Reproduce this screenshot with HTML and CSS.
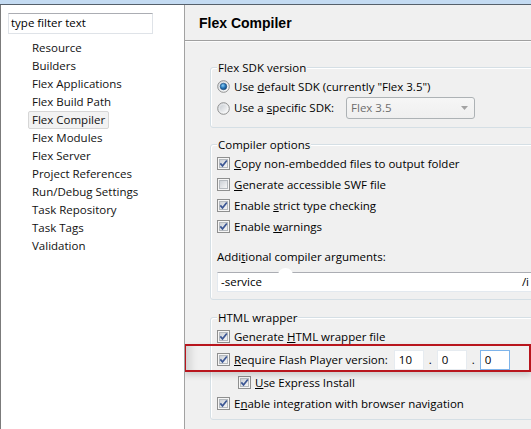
FILE: index.html
```html
<!DOCTYPE html>
<html>
<head>
<meta charset="utf-8">
<link rel="stylesheet" href="styles.css">
</head>
<body>
<svg class="defs" width="0" height="0" aria-hidden="true">
  <defs>
    <linearGradient id="cbg" x1="0" y1="0" x2="1" y2="1">
      <stop offset="0" stop-color="#c9ced4"/>
      <stop offset="1" stop-color="#f8f8f8"/>
    </linearGradient>
    <linearGradient id="rg" x1="0" y1="0" x2="1" y2="1">
      <stop offset="0" stop-color="#d6d9dd"/>
      <stop offset="1" stop-color="#ffffff"/>
    </linearGradient>
    <radialGradient id="rdot" cx="0.4" cy="0.35" r="0.7">
      <stop offset="0" stop-color="#8fd0f5"/>
      <stop offset="0.5" stop-color="#2a7cc0"/>
      <stop offset="1" stop-color="#12406e"/>
    </radialGradient>
    <symbol id="cb-on" viewBox="0 0 13 13">
      <rect x=".5" y=".5" width="12" height="12" fill="#f6f6f6" stroke="#8e8f8f"/>
      <rect x="2.5" y="2.5" width="8" height="8" fill="url(#cbg)" stroke="#b4b9be"/>
      <path d="M3.3 6.4 5.5 8.9 9.8 3.4" fill="none" stroke="#3b5694" stroke-width="1.7"/>
    </symbol>
    <symbol id="cb-off" viewBox="0 0 13 13">
      <rect x=".5" y=".5" width="12" height="12" fill="#f6f6f6" stroke="#8e8f8f"/>
      <rect x="2.5" y="2.5" width="8" height="8" fill="url(#cbg)" stroke="#b4b9be"/>
    </symbol>
    <symbol id="rb-on" viewBox="0 0 13 13">
      <circle cx="6.5" cy="6.5" r="5.8" fill="url(#rg)" stroke="#8e8f8f"/>
      <circle cx="6.5" cy="6.5" r="3.3" fill="url(#rdot)" stroke="#1b4d80" stroke-width=".6"/>
    </symbol>
    <symbol id="rb-off" viewBox="0 0 13 13">
      <circle cx="6.5" cy="6.5" r="5.8" fill="url(#rg)" stroke="#8e8f8f"/>
      <circle cx="6.5" cy="6.5" r="3.6" fill="url(#cbg)"/>
    </symbol>
  </defs>
</svg>

<div class="titlebar"></div>
<div class="main">
  <aside class="nav">
    <div class="filter">type filter text</div>
    <ul class="tree">
      <li><span>Resource</span></li>
      <li><span>Builders</span></li>
      <li><span>Flex Applications</span></li>
      <li><span>Flex Build Path</span></li>
      <li class="sel"><span>Flex Compiler</span></li>
      <li><span>Flex Modules</span></li>
      <li><span>Flex Server</span></li>
      <li><span>Project References</span></li>
      <li><span>Run/Debug Settings</span></li>
      <li><span>Task Repository</span></li>
      <li><span>Task Tags</span></li>
      <li><span>Validation</span></li>
    </ul>
  </aside>

  <section class="page">
    <header class="page-head">Flex Compiler</header>
    <div class="page-body">
      <fieldset class="group g-sdk">
        <legend>Flex SDK version</legend>
        <div class="row">
          <svg class="ctl" width="13" height="13"><use href="#rb-on"/></svg>
          <span class="lbl">Use <u>d</u>efault SDK (currently "Flex 3.5")</span>
        </div>
        <div class="row row-combo">
          <svg class="ctl" width="13" height="13"><use href="#rb-off"/></svg>
          <span class="lbl">Use a <u>s</u>pecific SDK:</span>
          <div class="combo">
            <span>Flex 3.5</span>
            <svg width="7" height="4"><path d="M0 0h7L3.5 4z" fill="#a3a3a3"/></svg>
          </div>
        </div>
      </fieldset>

      <fieldset class="group g-opts">
        <legend>Compiler options</legend>
        <div class="row">
          <svg class="ctl" width="13" height="13"><use href="#cb-on"/></svg>
          <span class="lbl"><u>C</u>opy non-embedded files to output folder</span>
        </div>
        <div class="row">
          <svg class="ctl" width="13" height="13"><use href="#cb-off"/></svg>
          <span class="lbl"><u>G</u>enerate accessible SWF file</span>
        </div>
        <div class="row">
          <svg class="ctl" width="13" height="13"><use href="#cb-on"/></svg>
          <span class="lbl">Enable <u>s</u>trict type checking</span>
        </div>
        <div class="row">
          <svg class="ctl" width="13" height="13"><use href="#cb-on"/></svg>
          <span class="lbl">Enable <u>w</u>arnings</span>
        </div>
        <div class="args-label">Addi<u>t</u>ional compiler arguments:</div>
        <div class="args">
          <span>-service</span>
          <span>/i</span>
          <span class="blot"></span>
        </div>
      </fieldset>

      <fieldset class="group g-html">
        <legend>HTML wrapper</legend>
        <div class="row">
          <svg class="ctl" width="13" height="13"><use href="#cb-on"/></svg>
          <span class="lbl">Generate <u>H</u>TML wrapper file</span>
        </div>
        <div class="row row-ver">
          <svg class="ctl" width="13" height="13"><use href="#cb-on"/></svg>
          <span class="lbl"><u>R</u>equire Flash Player version:</span>
          <span class="ver first">10</span>
          <span class="dot">.</span>
          <span class="ver">0</span>
          <span class="dot">.</span>
          <span class="ver focus">0</span>
          <div class="callout"></div>
        </div>
        <div class="row indent">
          <svg class="ctl" width="13" height="13"><use href="#cb-on"/></svg>
          <span class="lbl"><u>U</u>se Express Install</span>
        </div>
        <div class="row">
          <svg class="ctl" width="13" height="13"><use href="#cb-on"/></svg>
          <span class="lbl">E<u>n</u>able integration with browser navigation</span>
        </div>
      </fieldset>
    </div>
  </section>
</div>
</body>
</html>
```
FILE: styles.css
```css
* { box-sizing: border-box; }

html, body { margin: 0; }

body {
  width: 531px;
  height: 429px;
  overflow: hidden;
  background: #f0f0f0;
  font: 11.5px/1 "Open Sans", "Liberation Sans", sans-serif;
  color: #000;
}

.defs { position: absolute; width: 0; height: 0; overflow: hidden; }

.titlebar {
  height: 5px;
  background: #c4dbf2;
  border-bottom: 1px solid #56606b;
}

.main {
  display: flex;
  height: 424px;
}

/* ---------- left navigation ---------- */
.nav {
  width: 185px;
  flex: none;
  background: #fff;
  border-left: 1px solid #7b7b7b;
  border-right: 1px solid #a2a2a2;
  padding: 8px 0 0 7px;
}

.filter {
  width: 145px;
  height: 21px;
  border: 1px solid #dfe3e8;
  border-top-color: #abadb3;
  padding-left: 2px;
  line-height: 18px;
}

.tree {
  list-style: none;
  margin: 5px 0 0;
  padding: 0 0 0 20px;
}

.tree li { height: 18px; }

.tree span {
  display: inline-block;
  height: 18px;
  line-height: 16px;
  padding: 0 3px;
  border: 1px solid transparent;
  border-radius: 2px;
  color: #111;
}

.tree .sel span {
  background: #f2f2f2;
  border-color: #d6d6d6;
}

/* ---------- right page ---------- */
.page {
  flex: 1;
  min-width: 0;
  overflow: hidden;
}

.page-head {
  height: 36px;
  border-bottom: 1px solid #a0a0a0;
  box-shadow: 0 1px 0 #fcfcfc;
  padding: 1px 0 0 14px;
  font: bold 14px/35px "Liberation Sans", Arial, sans-serif;
  color: #000;
}

.page-body {
  padding: 18px 0 0 25px;
}

.group {
  margin: 0;
  width: 360px;
  min-width: 0;
  border: 1px solid #d5dfe5;
  border-radius: 3px;
  padding: 0 6px 8px 6px;
  box-shadow: inset 1px 1px 0 #fff;
}

.group legend {
  padding: 0 1px;
  line-height: 17px;
  background: #f0f0f0;
}

.g-opts { margin-top: 8px; padding-bottom: 7px; }
.g-html { margin-top: 9px; padding-bottom: 5px; }

.row {
  display: flex;
  align-items: center;
  height: 21px;
  white-space: nowrap;
}

.ctl { flex: none; display: block; }

.lbl { margin-left: 4px; }

.row-combo { height: 22px; }

.combo {
  margin-left: 12px;
  width: 129px;
  height: 22px;
  border: 1px solid #adb2b5;
  border-radius: 3px;
  background: linear-gradient(#f6f6f6, #efefef);
  color: #6d6d6d;
  display: flex;
  align-items: center;
  justify-content: space-between;
  padding: 0 6px 0 4px;
}

.args-label {
  margin-top: 10px;
  line-height: 20px;
}

.args {
  position: relative;
  margin-top: 5px;
  height: 20px;
  background: #fff;
  border: 1px solid #e3e9ef;
  border-top-color: #abadb3;
  display: flex;
  justify-content: space-between;
  align-items: center;
  padding: 0 33px 0 3px;
}

.blot {
  position: absolute;
  left: 60px;
  top: -5px;
  width: 15px;
  height: 14px;
  border-radius: 50%;
  background: #fff;
}

.row-ver {
  position: relative;
  height: 25px;
}

.ver {
  width: 30px;
  height: 20px;
  margin-top: 1px;
  background: #fff;
  border: 1px solid #e6ebf0;
  padding-left: 4px;
  line-height: 18px;
}

.ver.first { margin-left: 6px; }

.ver.focus { border-color: #7eb4ea; }

.dot {
  width: 13px;
  text-align: center;
}

.callout {
  position: absolute;
  left: -33px;
  top: -3px;
  width: 347px;
  height: 28px;
  border: 2px solid #b8151d;
  box-shadow: 0 3px 6px rgba(0, 0, 0, .16), inset 12px 0 8px -8px rgba(0, 0, 0, .14);
  pointer-events: none;
}

.indent { padding-left: 21px; }
```
